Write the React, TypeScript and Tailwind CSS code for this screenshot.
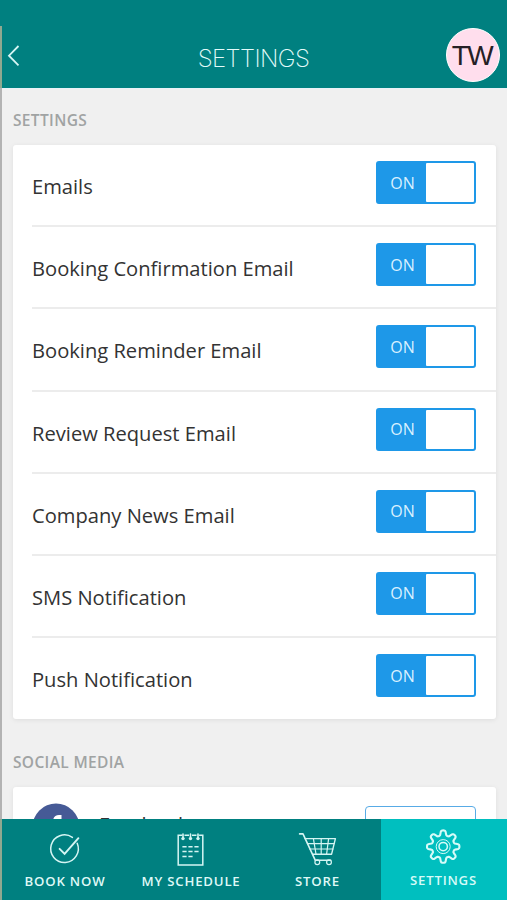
import React from 'react';

const FONT = "font-['Open_Sans','Noto_Sans',sans-serif]";

const NOTIFICATIONS = [
  'Emails',
  'Booking Confirmation Email',
  'Booking Reminder Email',
  'Review Request Email',
  'Company News Email',
  'SMS Notification',
  'Push Notification',
];

// outline of an eight-toothed gear with soft corners
function gearPath(cx: number, cy: number) {
  const points: string[] = [];
  for (let deg = 0; deg < 360; deg += 3) {
    const a = (deg * Math.PI) / 180;
    const r = 13.8 + 2.5 * Math.tanh(2 * Math.cos(8 * a));
    points.push(`${(cx + r * Math.sin(a)).toFixed(2)} ${(cy - r * Math.cos(a)).toFixed(2)}`);
  }
  return `M${points.join('L')}Z`;
}

function BookIcon() {
  return (
    <svg width="36" height="36" viewBox="0 0 36 36" fill="none" stroke="#d5f5f3" strokeWidth="1.5" strokeLinecap="round">
      <path d="M25.4 7.4A13.8 13.8 0 1 0 30.2 13.3" />
      <path d="M12.6 18.8l5 5L31.4 8.2" strokeWidth="1.9" />
    </svg>
  );
}

function ScheduleIcon() {
  return (
    <svg width="36" height="36" viewBox="0 0 36 36" fill="none" stroke="#d5f5f3" strokeWidth="1.5">
      <path d="M9.2 5.2H5.2V35H29.8V5.2H26.1M11.5 5.2h4.5M19 5.2h4.5" />
      <path d="M10 4v4M17.5 4v4M25 4v4" strokeWidth="1.6" strokeLinecap="round" />
      <g fill="#d5f5f3" stroke="none">
        <circle cx="10" cy="8.6" r="1.7" />
        <circle cx="17.5" cy="8.6" r="1.7" />
        <circle cx="25" cy="8.6" r="1.7" />
      </g>
      <path d="M9.4 16.7h4.2M15.4 16.7h4.2M21.4 16.7h4.2M9.4 21.5h4.2M15.4 21.5h4.2M21.4 21.5h4.2M9.4 26.5h4.2M15.4 26.5h4.2" strokeWidth="1.6" />
    </svg>
  );
}

function StoreIcon() {
  return (
    <svg width="40" height="36" viewBox="0 0 40 36" fill="none" stroke="#d5f5f3" strokeWidth="1.2" strokeLinejoin="round" strokeLinecap="round">
      <path d="M1.6 3.9h3.4L17.3 30.3h15.4" strokeWidth="1.6" />
      <path d="M6.9 8.6H37.4L33.6 24.2H14.6" strokeWidth="1.4" />
      <path d="M9.4 13.6H36.2M11.9 19H34.9M15.4 8.6l2.6 15.6M23.2 8.6v15.6M30.6 8.6l-2 15.6" />
      <circle cx="19.3" cy="32.2" r="2.4" />
      <circle cx="31" cy="32.2" r="2.4" />
    </svg>
  );
}

function SettingsIcon() {
  return (
    <svg width="36" height="36" viewBox="0 0 36 36" fill="none" stroke="#d5fbf8" strokeLinejoin="round">
      <path d={gearPath(17.2, 18.6)} strokeWidth="2.1" />
      <circle cx="17.2" cy="18.6" r="7" strokeWidth="1" />
      <circle cx="17.2" cy="18.6" r="4.2" strokeWidth="1.5" />
    </svg>
  );
}

function Toggle() {
  return (
    <div className="mt-4 flex h-[43px] w-[100px] rounded-[3px] border-2 border-[#1e98e8] bg-[#1e98e8] text-[#d9f0ff]">
      <span className="flex w-12 items-center justify-center pl-px text-[16px] leading-none">ON</span>
      <span className="flex-1 rounded-[1px] bg-white" />
    </div>
  );
}

function SectionLabel({ children }: { children: React.ReactNode }) {
  return <h2 className="text-[15.5px] leading-5 font-semibold tracking-[0.35px] text-[#a0a3a3]">{children}</h2>;
}

function NavItem({ icon, label, active }: { icon: React.ReactNode; label: string; active?: boolean }) {
  return (
    <div className={active ? 'flex flex-col items-center bg-[#00bfbf] pt-[9px]' : 'flex flex-col items-center pt-[11px]'}>
      {icon}
      <span className={active
        ? 'mt-[6px] pr-px text-[13.2px] leading-5 font-semibold tracking-[0.8px] whitespace-nowrap text-[#d5fbf8]'
        : 'mt-[5px] text-[13.2px] leading-5 font-semibold tracking-[0.8px] whitespace-nowrap text-[#dff8f6]'}>
        {label}
      </span>
    </div>
  );
}

export default function App() {
  return (
    <div className={`relative flex h-[900px] w-[507px] flex-col overflow-hidden bg-[#f0f0f0] ${FONT}`}>
      <header className="grid h-[88px] shrink-0 grid-cols-[1fr_auto_1fr] bg-[#008080]">
        <div className="pt-[45px] pl-[7px]">
          <svg width="13" height="22" viewBox="0 0 13 22" fill="none" stroke="#d5f5f3" strokeWidth="1.8">
            <path d="M11.5 1L2 10.7L11.5 20.3" />
          </svg>
        </div>
        <h1 className="pt-[43px] font-['Inter',sans-serif] text-[24px] leading-8 font-extralight tracking-[-0.6px] text-[#e3fbfa]">SETTINGS</h1>
        <div className="flex justify-end pt-7 pr-[7px]">
          <div className="flex size-[54px] items-center justify-center rounded-full border border-white bg-[#ffdeed] pt-px pr-[2px] font-['Liberation_Sans',sans-serif] text-[28px] leading-none tracking-[-1.5px] text-[#252025]">
            TW
          </div>
        </div>
      </header>

      <main className="flex min-h-0 flex-1 flex-col overflow-hidden border-t border-[#e9f2f8] pr-[11px] pl-[13px]">
        <div className="shrink-0 pt-[21px] pb-[15px]">
          <SectionLabel>SETTINGS</SectionLabel>
        </div>
        <div className="shrink-0 rounded-[3px] bg-white pl-[19px] shadow-[0_1px_5px_rgba(0,0,0,0.08)]">
          {NOTIFICATIONS.map((name) => (
            <div key={name} className="flex h-[82.2px] justify-between border-b-2 border-[#ececec] pr-5 last:h-[80.8px] last:border-b-0">
              <span className="pt-[27px] text-[20.15px] leading-7 text-[#333]">{name}</span>
              <Toggle />
            </div>
          ))}
        </div>
        <div className="shrink-0 pt-[33px] pb-[15px]">
          <SectionLabel>SOCIAL MEDIA</SectionLabel>
        </div>
        <div className="flex h-24 shrink-0 rounded-[3px] bg-white pr-5 pl-[19px] shadow-[0_1px_5px_rgba(0,0,0,0.08)]">
          <svg className="mt-4" width="48" height="48" viewBox="0 0 48 48">
            <circle cx="24" cy="24" r="23.5" fill="#465a96" />
            <path d="M21 42V26H17V20H21V18.5C21 14 23.5 12 27 12H29.5V17.5H28C26.8 17.5 26.5 18.2 26.5 19.4V20H29.5V26H26.5V42Z" fill="white" />
          </svg>
          <span className="mt-[23px] ml-[19px] flex-1 text-[20.15px] leading-7 text-[#333]">Facebook</span>
          <div className="mt-[19px] h-[43px] w-[111px] rounded-[4px] border-[1.5px] border-[#58abe6]" />
        </div>
      </main>

      <nav className="grid h-[81px] shrink-0 grid-cols-[126px_126px_127px_1fr] bg-[#008080] pl-[2px]">
        <NavItem icon={<BookIcon />} label="BOOK NOW" />
        <NavItem icon={<ScheduleIcon />} label="MY SCHEDULE" />
        <NavItem icon={<StoreIcon />} label="STORE" />
        <NavItem icon={<SettingsIcon />} label="SETTINGS" active />
      </nav>

      {/* thin edge along the left side of the screen */}
      <div className="absolute top-[26px] bottom-0 left-0 flex w-[2px] flex-col">
        <div className="h-[62px] bg-[#8fa890]" />
        <div className="flex-1 bg-[#b3b3b3]" />
        <div className="h-[81px] bg-[#8fa890]" />
      </div>
    </div>
  );
}
